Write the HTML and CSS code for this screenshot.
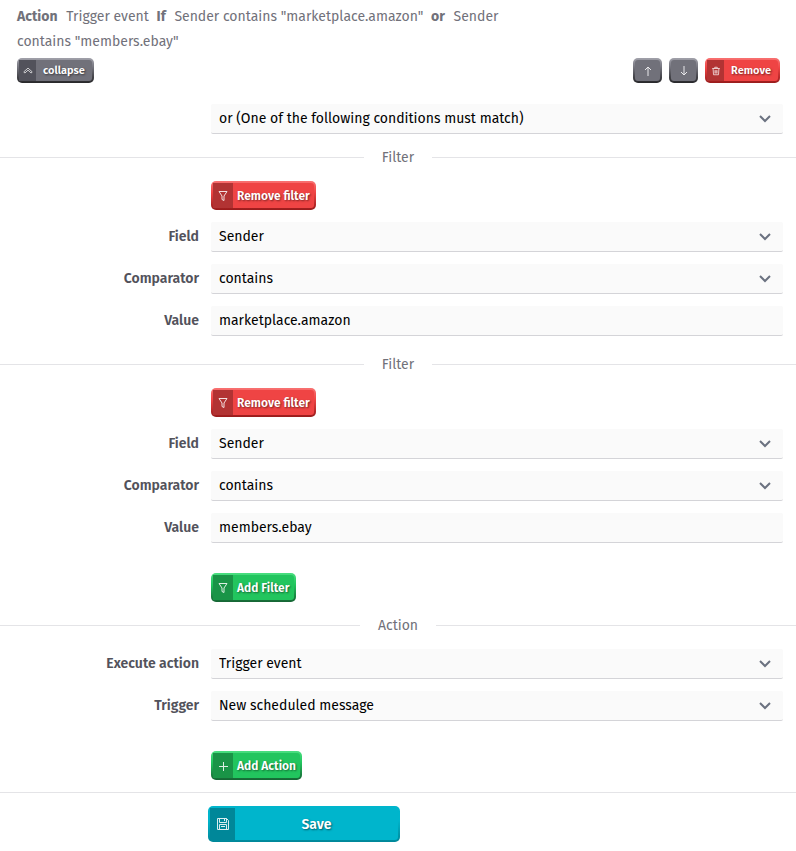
FILE: index.html
```html
<!DOCTYPE html>
<html lang="en">
<head>
    <meta charset="UTF-8">
    <meta name="viewport" content="width=device-width, initial-scale=1.0">
    <title>Action</title>
    <link rel="stylesheet" href="styles.css">
</head>
<body>
    <svg class="sprite" aria-hidden="true">
        <symbol id="chevron" viewBox="0 0 12 8"><path d="M1 1l5 5 5-5"/></symbol>
        <symbol id="funnel" viewBox="0 0 12 12"><path d="M2 1.500h8L7 6v4.500L5 9.500V6z"/></symbol>
        <symbol id="collapse" viewBox="0 0 12 12"><path d="M1 7 6 2.500 11 7 9.800 8.500 6 5 2.200 8.500z"/></symbol>
        <symbol id="up" viewBox="0 0 12 12"><path d="M6 11V2M3 5l3-3 3 3"/></symbol>
        <symbol id="down" viewBox="0 0 12 12"><path d="M6 1v9M3 7l3 3 3-3"/></symbol>
        <symbol id="trash" viewBox="0 0 12 12"><path d="M1.500 3h9M4.500 3V1.500h3V3M2.500 3l.5 7.500h6L9.500 3M4.800 5v4M6 5v4M7.200 5v4"/></symbol>
        <symbol id="plus" viewBox="0 0 12 12"><path d="M6.500 2v9M2 6.500h9"/></symbol>
        <symbol id="disk" viewBox="0 0 14 14"><path d="M1.500 1.500h9l2 2v9h-11zM3.500 1.500v4h7v-4M8.500 2v2M3.500 12.500v-5h7v5M5 9.500h4"/></symbol>
    </svg>

    <form>
        <header class="summary">
            <p><b>Action</b> <span>Trigger event</span> <b>If</b> <span>Sender contains "marketplace.amazon"</span> <b>or</b> <span>Sender</span> <span>contains "members.ebay"</span></p>
            <div class="toolbar">
                <button type="button" class="btn small gray">
                    <span class="icon"><svg><use href="#collapse"/></svg></span><span class="text">collapse</span>
                </button>
                <div class="tools">
                    <button type="button" class="btn small gray square" aria-label="Move up"><svg><use href="#up"/></svg></button>
                    <button type="button" class="btn small gray square" aria-label="Move down"><svg><use href="#down"/></svg></button>
                    <button type="button" class="btn small red">
                        <span class="icon"><svg><use href="#trash"/></svg></span><span class="text">Remove</span>
                    </button>
                </div>
            </div>
        </header>

        <div class="row">
            <div class="control">
                <select aria-label="Match">
                    <option>or (One of the following conditions must match)</option>
                    <option>and (All of the following conditions must match)</option>
                </select>
                <svg class="chevron"><use href="#chevron"/></svg>
            </div>
        </div>

        <section class="filter">
            <h2 class="divider">Filter</h2>
            <div class="row">
                <div class="control">
                    <button type="button" class="btn red">
                        <span class="icon"><svg><use href="#funnel"/></svg></span><span class="text">Remove filter</span>
                    </button>
                </div>
            </div>
            <div class="row">
                <label for="field1">Field</label>
                <div class="control">
                    <select id="field1"><option>Sender</option></select>
                    <svg class="chevron"><use href="#chevron"/></svg>
                </div>
            </div>
            <div class="row">
                <label for="comparator1">Comparator</label>
                <div class="control">
                    <select id="comparator1"><option>contains</option></select>
                    <svg class="chevron"><use href="#chevron"/></svg>
                </div>
            </div>
            <div class="row">
                <label for="value1">Value</label>
                <div class="control"><input type="text" id="value1" value="marketplace.amazon"></div>
            </div>
        </section>

        <section class="filter">
            <h2 class="divider">Filter</h2>
            <div class="row">
                <div class="control">
                    <button type="button" class="btn red">
                        <span class="icon"><svg><use href="#funnel"/></svg></span><span class="text">Remove filter</span>
                    </button>
                </div>
            </div>
            <div class="row">
                <label for="field2">Field</label>
                <div class="control">
                    <select id="field2"><option>Sender</option></select>
                    <svg class="chevron"><use href="#chevron"/></svg>
                </div>
            </div>
            <div class="row">
                <label for="comparator2">Comparator</label>
                <div class="control">
                    <select id="comparator2"><option>contains</option></select>
                    <svg class="chevron"><use href="#chevron"/></svg>
                </div>
            </div>
            <div class="row">
                <label for="value2">Value</label>
                <div class="control"><input type="text" id="value2" value="members.ebay"></div>
            </div>
        </section>

        <div class="row add">
            <div class="control">
                <button type="button" class="btn green">
                    <span class="icon"><svg><use href="#funnel"/></svg></span><span class="text">Add Filter</span>
                </button>
            </div>
        </div>

        <h2 class="divider">Action</h2>
        <div class="row">
            <label for="action">Execute action</label>
            <div class="control">
                <select id="action"><option>Trigger event</option></select>
                <svg class="chevron"><use href="#chevron"/></svg>
            </div>
        </div>
        <div class="row">
            <label for="trigger">Trigger</label>
            <div class="control">
                <select id="trigger"><option>New scheduled message</option></select>
                <svg class="chevron"><use href="#chevron"/></svg>
            </div>
        </div>
        <div class="row last">
            <div class="control">
                <button type="button" class="btn green">
                    <span class="icon"><svg><use href="#plus"/></svg></span><span class="text">Add Action</span>
                </button>
            </div>
        </div>

        <footer>
            <button type="submit" class="btn large cyan">
                <span class="icon"><svg><use href="#disk"/></svg></span><span class="text">Save</span>
            </button>
        </footer>
    </form>
</body>
</html>
```
FILE: styles.css
```css
* {
    box-sizing: border-box;
}
body {
    margin: 0;
    background: white;
    color: #71717a;
    font-family: "Fira Sans", "Noto Sans", sans-serif;
    font-size: 14px;
}
svg {
    display: block;
    fill: none;
    stroke: currentColor;
}
.sprite {
    position: absolute;
    width: 0;
    height: 0;
}

/* summary */
.summary {
    padding: 4px 16px 21px 17px;
}
.summary p {
    max-width: 510px;
    margin: 0 0 4px;
    line-height: 25px;
}
.summary b {
    margin-right: 5px;
}
.summary b:not(:first-child) {
    margin-left: 4px;
}
.toolbar, .tools {
    display: flex;
    justify-content: space-between;
}
.tools {
    gap: 7px;
}

/* form rows */
.row {
    display: grid;
    grid-template-columns: 25% 1fr;
    margin-bottom: 12px;
}
.row label {
    align-self: center;
    text-align: right;
    font-weight: 600;
    line-height: 18px;
    padding-bottom: 1px;
    color: #52525b;
}
.control {
    position: relative;
    grid-column: 2;
    display: flex;
    padding: 0 13px 0 12px;
}
select, input {
    width: 100%;
    height: 30px;
    padding: 0 8px;
    border: 0;
    border-bottom: 1px solid #d4d4d8;
    border-radius: 2px;
    background: #fafafa;
    color: black;
    font: inherit;
    appearance: none;
}
.chevron {
    position: absolute;
    top: 11px;
    right: 25px;
    width: 12px;
    height: 8px;
    stroke: #6b7280;
    stroke-width: 2;
    pointer-events: none;
}
.filter {
    padding-bottom: 5px;
}
.add {
    margin-top: 13px;
}
.last {
    margin-top: 30px;
}
.divider {
    display: flex;
    align-items: center;
    gap: 18px;
    margin: 0 0 12px;
    font-size: 14px;
    font-weight: 400;
    line-height: 23px;
}
.divider::before, .divider::after {
    content: "";
    flex: 1;
    height: 1px;
    background: #e4e4e7;
}

/* buttons */
.btn {
    display: flex;
    align-items: stretch;
    height: 29px;
    padding: 0;
    border: 2px solid transparent;
    border-radius: 5px;
    background: linear-gradient(var(--face), var(--face)) padding-box,
                linear-gradient(var(--light), var(--face) 40%, var(--dark)) border-box;
    color: white;
    font: 600 12px "Fira Sans", "Noto Sans", sans-serif;
    text-shadow: 1px 1px 2px rgba(0, 0, 0, 0.5);
    cursor: pointer;
}
.btn svg {
    width: 12px;
    height: 12px;
    opacity: 0.85;
}
.icon {
    display: flex;
    align-items: center;
    justify-content: center;
    width: 20px;
    background: var(--strip);
}
.text {
    flex: 1;
    align-self: center;
    padding: 0 4px;
}
.small {
    height: 25px;
    font-size: 11px;
}
.small .icon svg {
    width: 10px;
    height: 10px;
}
.small .icon {
    width: 17px;
}
.small .text {
    padding: 0 7px;
}
.square {
    width: 29px;
    align-items: center;
    justify-content: center;
}
.large {
    width: 192px;
    height: 36px;
    font-size: 14px;
}
.large .icon {
    width: 25px;
}
.large svg {
    width: 14px;
    height: 14px;
}
.gray {
    --face: #71717a;
    --light: #a1a1aa;
    --dark: #27272a;
    --strip: #52525b;
}
.red {
    --face: #ef4444;
    --light: #f87171;
    --dark: #991b1b;
    --strip: #b23333;
}
.green {
    --face: #22c55e;
    --light: #4ade80;
    --dark: #166534;
    --strip: #1a9447;
}
.cyan {
    --face: #00b5cc;
    --light: #00b5cc;
    --dark: #008799;
    --strip: #008799;
}
footer {
    padding: 13px 208px;
    border-top: 1px solid #e4e4e7;
}
```
